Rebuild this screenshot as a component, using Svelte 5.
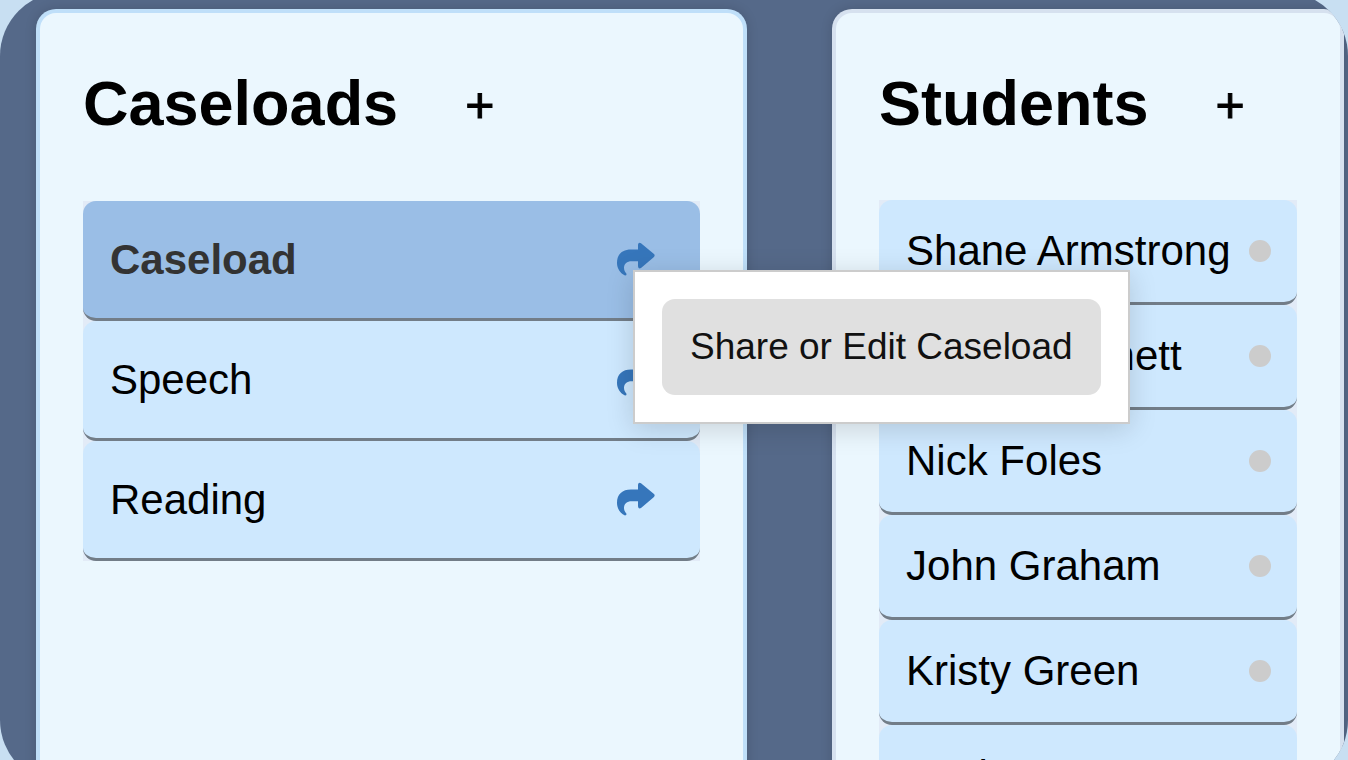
<script>
  let caseloads = ['Caseload', 'Speech', 'Reading'];
  let students = [
    'Shane Armstrong',
    'Susan Bennett',
    'Nick Foles',
    'John Graham',
    'Kristy Green',
    'Kevin Hart'
  ];

  let selected = 'Caseload';
  let menuFor = 'Caseload';

  function toggleMenu(name) {
    menuFor = menuFor === name ? null : name;
  }
</script>

<div class="page">
  <main class="board">
    <section class="panel caseloads">
      <header>
        <h2>Caseloads</h2>
        <button type="button" class="add" aria-label="Add caseload">+</button>
      </header>
      <ul>
        {#each caseloads as name}
          <li class:selected={name === selected}>
            <button type="button" class="name" on:click={() => (selected = name)}>{name}</button>
            <button type="button" class="share" aria-label="Share {name}" on:click={() => toggleMenu(name)}>
              <svg viewBox="0 0 114 101" width="38" height="34" aria-hidden="true">
                <path d="M63 8 Q64 -1 72 3 L110 35 Q116 40 110 45 L73 77 Q64 82 63 72 V57 H44 C30 57 21 64 21 77 C21 86 25 90 28 94 Q30 100 24 100 C10 94 0 80 0 62 C0 36 16 22 42 22 H63 Z" />
              </svg>
            </button>
            {#if menuFor === name}
              <div class="menu">
                <button type="button">Share or Edit Caseload</button>
              </div>
            {/if}
          </li>
        {/each}
      </ul>
    </section>

    <section class="panel students">
      <header>
        <h2>Students</h2>
        <button type="button" class="add" aria-label="Add student">+</button>
      </header>
      <ul>
        {#each students as name}
          <li>
            <button type="button" class="name">{name}</button>
            <span class="dot"></span>
          </li>
        {/each}
      </ul>
    </section>
  </main>
</div>

<style>
  :global(body) {
    background: #c8dff2;
    font-family: "Liberation Sans", Arial, Helvetica, sans-serif;
  }

  .page {
    display: flex;
    height: 100vh;
    overflow: hidden;
  }

  .board {
    flex: 1;
    display: grid;
    grid-template-columns: 25fr 18fr;
    gap: 85px;
    box-sizing: border-box;
    margin: -8px 0 -24px;
    padding: 17px 4px 0 36px;
    border-radius: 64px;
    background: #556989;
    overflow: hidden;
  }

  .panel {
    min-width: 0;
    padding: 53px 43px 0;
    border: 4px solid #bfdff9;
    border-bottom: 0;
    border-radius: 20px 20px 0 0;
    background: #ebf7fe;
    box-shadow: 0 0 12px rgba(0, 0, 0, 0.15);
  }

  .students {
    border-color: #d6e1ef;
  }

  header {
    display: flex;
    align-items: center;
    gap: 67px;
    height: 74px;
    margin-bottom: 61px;
  }

  .students header {
    height: 73px;
  }

  h2 {
    margin: 0;
    font-size: 63px;
    line-height: 74px;
    color: #000;
  }

  button {
    padding: 0;
    border: 0;
    background: none;
    font-family: inherit;
    color: #000;
    cursor: pointer;
  }

  .add {
    padding-top: 4px;
    font-size: 50px;
    line-height: 60px;
    -webkit-text-stroke: 1px #000;
  }

  ul {
    margin: 0;
    padding: 0;
    list-style: none;
    background: #e2ebf7;
  }

  li {
    position: relative;
    display: flex;
    align-items: center;
    box-sizing: border-box;
    height: 120px;
    padding: 0 27px;
    border-bottom: 3px solid #727d88;
    border-radius: 13px;
    background: #cee8fe;
  }

  .students li {
    height: 105px;
    padding-right: 26px;
  }

  .selected {
    background: #9abee6;
  }

  .name {
    flex: 1;
    font-size: 42px;
    line-height: 48px;
    text-align: left;
    white-space: nowrap;
  }

  .selected .name {
    font-weight: bold;
    color: #333;
  }

  .students .name {
    padding-bottom: 1px;
  }

  .share {
    margin-right: 18px;
    padding-bottom: 2px;
  }

  .share svg {
    display: block;
    fill: #3676bb;
  }

  .dot {
    width: 22px;
    height: 22px;
    border-radius: 50%;
    background: #ccc;
  }

  .menu {
    position: absolute;
    top: 69px;
    left: calc(100% - 67px);
    z-index: 10;
    padding: 27px;
    border: 2px solid #ccc;
    background: #fff;
    box-shadow: 0 5px 26px rgba(0, 0, 0, 0.15);
  }

  .menu button {
    padding: 26px 28px;
    border-radius: 13px;
    background: #e0e0e0;
    font-size: 37px;
    line-height: 44px;
    white-space: nowrap;
    color: #111;
  }
</style>
